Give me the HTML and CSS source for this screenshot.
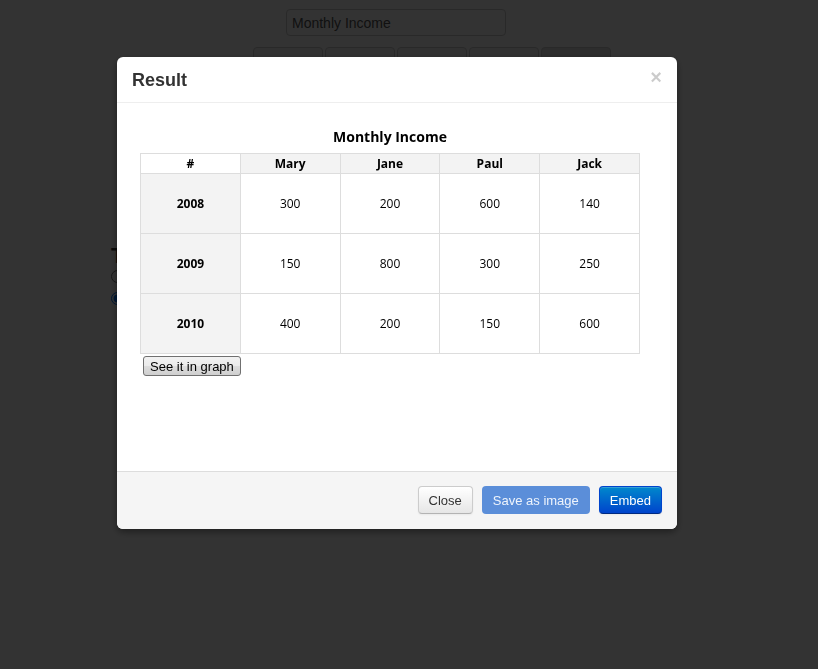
FILE: index.html
```html
<!DOCTYPE html>
<html>
<head>
<meta charset="utf-8">
<link rel="stylesheet" href="styles.css">
</head>
<body>
<div class="page">
  <div class="name-row">
    <input class="name-input" type="text" value="Monthly Income">
  </div>
  <div class="btn-row">
    <button class="pbtn">Mary</button>
    <button class="pbtn">Jane</button>
    <button class="pbtn">Paul</button>
    <button class="pbtn">Jack</button>
    <button class="pbtn pbtn-dark">Add</button>
  </div>
  <div class="side">
    <h2 class="side-title">Type</h2>
    <label class="radio"><input type="radio" name="t"> Table</label>
    <label class="radio"><input type="radio" name="t" checked> Graph</label>
  </div>
</div>

<div class="backdrop"></div>

<div class="modal">
  <div class="modal-header">
    <h3 class="modal-title">Result</h3>
    <span class="close">&times;</span>
  </div>
  <div class="modal-body">
    <div class="result">
      <div class="result-title">Monthly Income</div>
      <table class="grid">
        <thead>
          <tr><th class="corner">#</th><th>Mary</th><th>Jane</th><th>Paul</th><th>Jack</th></tr>
        </thead>
        <tbody>
          <tr><th class="year">2008</th><td>300</td><td>200</td><td>600</td><td>140</td></tr>
          <tr><th class="year">2009</th><td>150</td><td>800</td><td>300</td><td>250</td></tr>
          <tr><th class="year">2010</th><td>400</td><td>200</td><td>150</td><td>600</td></tr>
        </tbody>
      </table>
      <button class="graph-btn">See it in graph</button>
    </div>
  </div>
  <div class="modal-footer">
    <button class="btn">Close</button>
    <button class="btn btn-primary btn-disabled">Save as image</button>
    <button class="btn btn-primary">Embed</button>
  </div>
</div>
</body>
</html>
```

FILE: styles.css
```css
html, body {
  margin: 0;
  padding: 0;
  background: #ffffff;
  font-family: "Liberation Sans", Arial, sans-serif;
  color: #333;
}

.page {
  padding-top: 9px;
}

.name-row {
  padding-left: 286px;
}

.name-input {
  box-sizing: border-box;
  width: 220px;
  height: 27px;
  border: 1px solid #ccc;
  border-radius: 4px;
  padding: 3px 5px;
  font-family: "Liberation Sans", Arial, sans-serif;
  font-size: 14px;
  color: #555;
  display: block;
}

.btn-row {
  display: flex;
  gap: 2px;
  padding-left: 253px;
  margin-top: 11px;
}

.pbtn {
  box-sizing: border-box;
  width: 70px;
  height: 32px;
  border: 1px solid #ccc;
  border-radius: 4px;
  background: #f5f5f5;
  font-family: "Liberation Sans", Arial, sans-serif;
  font-size: 14px;
  color: #333;
  padding: 0;
}

.pbtn-dark {
  background: #e0e0e0;
}

.side {
  padding-left: 111px;
  margin-top: 164px;
}

.side-title {
  margin: 0 0 -2px;
  font-size: 22px;
  line-height: 26px;
  color: #333;
}

.radio {
  display: block;
  font-size: 14px;
  line-height: 22px;
}

.radio input {
  margin: 0 4px 0 0;
}

.backdrop {
  position: fixed;
  inset: 0;
  background: rgba(0, 0, 0, 0.8);
}

.modal {
  position: fixed;
  top: 57px;
  left: 117px;
  width: 560px;
  background: #fff;
  border-radius: 6px;
  box-shadow: 0 3px 7px rgba(0, 0, 0, 0.4);
  overflow: hidden;
}

.modal-header {
  display: flex;
  align-items: center;
  justify-content: space-between;
  height: 45px;
  padding: 0 15px;
  border-bottom: 1px solid #eee;
}

.modal-title {
  margin: 0;
  font-size: 18px;
  font-weight: bold;
  color: #333;
  line-height: 45px;
  padding-top: 1px;
}

.close {
  font-size: 20px;
  font-weight: bold;
  color: #000;
  opacity: 0.2;
  line-height: 20px;
  margin-top: -5px;
  margin-right: 0;
}

.modal-body {
  box-sizing: border-box;
  height: 368px;
  padding: 24px 15px 15px 23px;
}

.result {
  width: 500px;
}

.result-title {
  text-align: center;
  font-family: "Open Sans", sans-serif;
  font-weight: bold;
  font-size: 14px;
  line-height: 20px;
  color: #000;
  margin-bottom: 6px;
}

.grid {
  border-collapse: collapse;
  width: 500px;
  table-layout: fixed;
  font-family: "Open Sans", sans-serif;
  font-size: 12px;
  color: #000;
}

.grid th, .grid td {
  border: 1px solid #ddd;
  text-align: center;
  padding: 0;
}

.grid thead th {
  height: 19px;
  background: #f3f3f3;
  font-weight: bold;
}

.grid thead th.corner {
  background: #fff;
}

.grid tbody td, .grid tbody th {
  height: 59px;
}

.grid th.year {
  background: #f3f3f3;
  font-weight: bold;
  font-size: 12px;
}

.graph-btn {
  margin: 2px 0 0 3px;
  padding: 1px 6px;
  height: 20px;
  font-family: "Liberation Sans", Arial, sans-serif;
  font-size: 13px;
  color: #000;
  border: 1px solid #707070;
  border-radius: 3px;
  background: linear-gradient(#f2f2f2, #ebebeb 50%, #dddddd 51%, #cfcfcf);
}

.modal-footer {
  display: flex;
  justify-content: flex-end;
  gap: 9px;
  padding: 14px 15px 15px;
  background: #f5f5f5;
  border-top: 1px solid #ddd;
}

.btn {
  box-sizing: border-box;
  height: 28px;
  padding: 0 10px;
  font-family: "Liberation Sans", Arial, sans-serif;
  font-size: 13px;
  color: #333;
  border: 1px solid #ccc;
  border-bottom-color: #b3b3b3;
  border-radius: 4px;
  background: linear-gradient(#ffffff, #e6e6e6);
  box-shadow: inset 0 1px 0 rgba(255,255,255,.2), 0 1px 2px rgba(0,0,0,.05);
}

.btn-primary {
  color: #fff;
  border-color: #0044cc #0044cc #002a80;
  background: linear-gradient(#0088cc, #0044cc);
}

.btn-disabled {
  border-color: transparent;
  background: #5b8ed9;
  box-shadow: none;
  color: #eef4fc;
}
```
